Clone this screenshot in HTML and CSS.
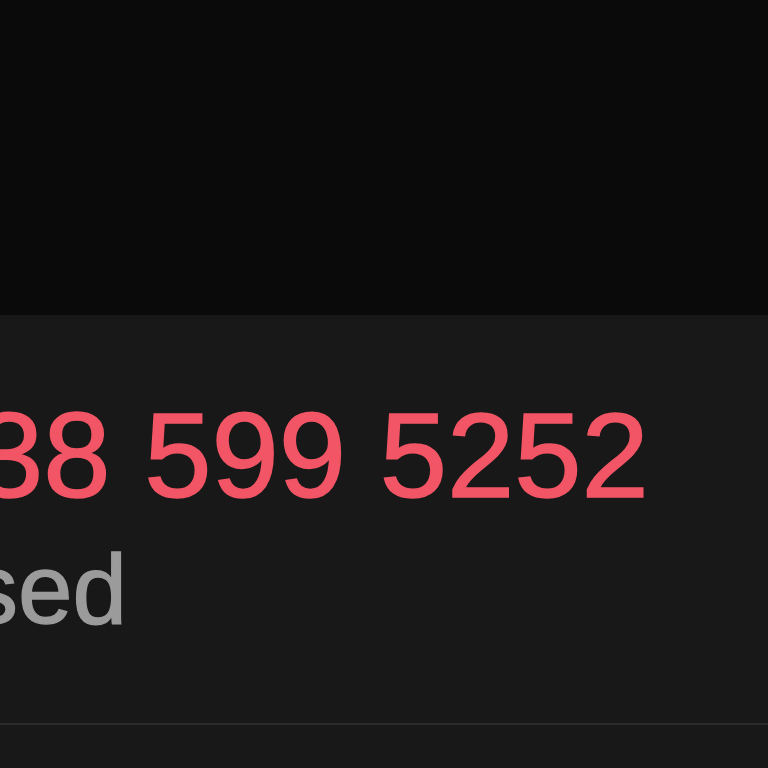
FILE: index.html
```html
<!DOCTYPE html>
<html>
<head>
<meta charset="utf-8">
<link rel="stylesheet" href="styles.css">
</head>
<body>
<div class="top"></div>
<section class="panel">
  <div class="phone">38 599 5252</div>
  <div class="status">sed</div>
</section>
<div class="rest"></div>
</body>
</html>
```
FILE: styles.css
```css
html, body {
  margin: 0;
  padding: 0;
  background: #181818;
  overflow: hidden;
}
body {
  width: 768px;
  height: 768px;
  font-family: "Liberation Sans", Arial, sans-serif;
}
.top {
  height: 315px;
  background: #0a0a0a;
}
.panel {
  height: 328px;
  padding-top: 80px;
  background: #181818;
  border-bottom: 2px solid #2b2b2b;
  box-sizing: content-box;
}
.phone {
  margin-left: -24px;
  font-size: 121px;
  line-height: 1;
  color: #f25565;
  -webkit-text-stroke: 1.6px #f25565;
  white-space: nowrap;
}
.status {
  margin-top: 24px;
  margin-left: -31px;
  font-size: 98px;
  line-height: 1;
  color: #9b9b9b;
  -webkit-text-stroke: 1.4px #9b9b9b;
  white-space: nowrap;
}
.rest {
  height: 60px;
  background: #181818;
}
```
